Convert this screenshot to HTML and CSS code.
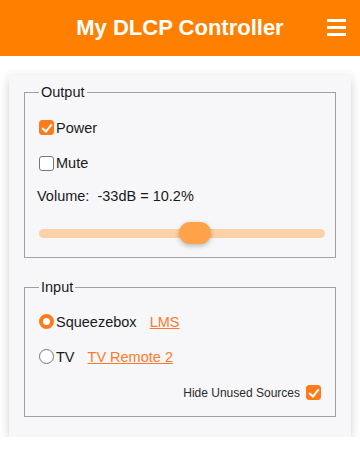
FILE: index.html
```html
<!DOCTYPE html>
<html>
<head>
<meta charset="utf-8">
<link rel="stylesheet" href="styles.css">
</head>
<body>
<header class="topbar">
  <h1 class="title">My DLCP Controller</h1>
  <div class="menu" aria-label="menu"><span></span><span></span><span></span></div>
</header>
<main class="card">
  <fieldset class="group">
    <legend>Output</legend>
    <label class="row check power"><input class="box" type="checkbox" checked>Power</label>
    <label class="row check mute"><input class="box" type="checkbox">Mute</label>
    <div class="row volume">Volume:&nbsp; -33dB = 10.2%</div>
    <div class="slider-row"><input class="slider" type="range" min="0" max="100" value="55"></div>
  </fieldset>
  <fieldset class="group input-group">
    <legend>Input</legend>
    <div class="row source"><label class="check"><input class="dot" type="radio" name="src" checked>Squeezebox</label><a href="#" class="link">LMS</a></div>
    <div class="row source"><label class="check"><input class="dot" type="radio" name="src">TV</label><a href="#" class="link">TV Remote 2</a></div>
    <label class="hide-row">Hide Unused Sources <input class="box" type="checkbox" checked></label>
  </fieldset>
</main>
</body>
</html>
```
FILE: styles.css
```css
html, body {
  margin: 0;
  padding: 0;
  background: #ffffff;
  font-family: "Liberation Sans", Arial, sans-serif;
  color: #1a1a1a;
}
.topbar {
  height: 56px;
  background: #ff8000;
  display: flex;
  align-items: center;
  justify-content: center;
  position: relative;
}
.title {
  margin: 0;
  color: #fff;
  font-size: 22px;
  font-weight: bold;
}
.menu {
  position: absolute;
  right: 14px;
  top: 19px;
  width: 19px;
  display: flex;
  flex-direction: column;
  gap: 4px;
}
.menu span {
  display: block;
  height: 3px;
  background: #fff;
}
.card {
  display: block;
  width: 95%;
  margin: 19px auto 0;
  box-sizing: border-box;
  background: #f7f7f9;
  box-shadow: 0 3px 10px rgba(0,0,0,0.18);
  padding: 1px 15px 20px;
}
.group {
  margin: 8px 0 0;
  padding: 9px 10px 2px 14px;
  border: 1px solid #a0a0a0;
  min-width: 0;
}
.input-group { margin-top: 21px; padding-bottom: 5px; }
.group legend {
  font-size: 14.5px;
  padding: 0 2px;
  color: #1a1a1a;
}
.row {
  font-size: 14.5px;
  display: flex;
  align-items: center;
}
.check {
  display: flex;
  align-items: center;
  font-size: 14.5px;
  height: 35px;
}
.check.power { height: 37px; }
.check.mute { height: 34px; }
.box, .dot {
  -webkit-appearance: none;
  appearance: none;
  box-sizing: border-box;
  margin: 0 2px 0 0;
  width: 15px;
  height: 15px;
  flex: none;
  position: relative;
  background: #fff;
  border: 1px solid #767676;
}
.box { border-radius: 3px; }
.box:checked {
  background: #ff7a1a;
  border-color: #ff7a1a;
}
.box:checked::after {
  content: "";
  position: absolute;
  left: 4px;
  top: 1px;
  width: 4px;
  height: 8px;
  border: solid #fff;
  border-width: 0 2px 2px 0;
  transform: rotate(40deg);
}
.dot { border-radius: 50%; }
.dot:checked {
  border: 4px solid #ff7a1a;
}
.volume {
  height: 31px;
  margin-left: -2px;
}
.slider-row {
  height: 44px;
  display: flex;
  align-items: center;
}
.slider {
  -webkit-appearance: none;
  appearance: none;
  width: 100%;
  height: 9px;
  margin: 0;
  border-radius: 5px;
  background: #fcd1a8;
  outline: none;
}
.slider::-webkit-slider-thumb {
  -webkit-appearance: none;
  appearance: none;
  width: 32px;
  height: 22px;
  border-radius: 11px;
  background: #ffa24a;
  box-shadow: 0 2px 5px rgba(0,0,0,0.25);
  cursor: pointer;
}
.source { height: 35px; }
.source .check { height: 35px; }
.link {
  color: #ff7a2a;
  margin-left: 13px;
  font-size: 14.5px;
}
.hide-row {
  display: flex;
  justify-content: flex-end;
  align-items: center;
  font-size: 12px;
  color: #2a2a2a;
  height: 37px;
  padding-right: 4px;
}
.hide-row .box {
  margin: 0 0 0 6px;
}
```
